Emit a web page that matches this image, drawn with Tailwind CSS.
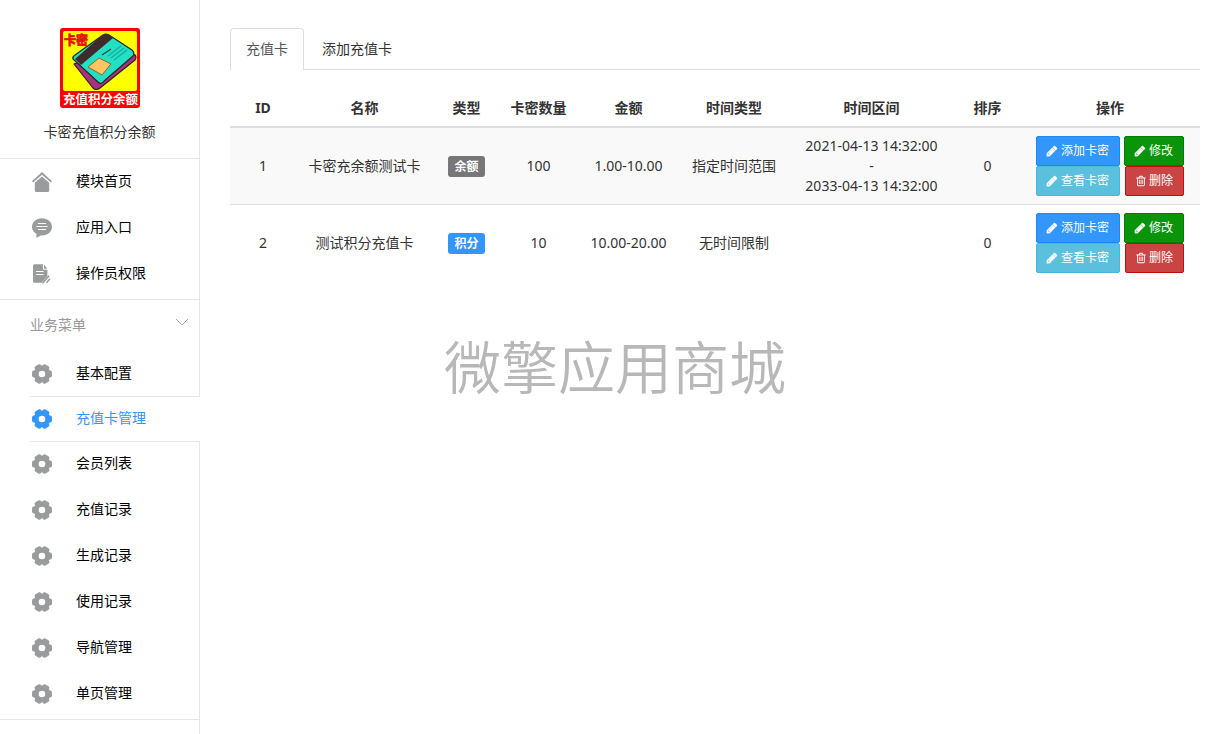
<!DOCTYPE html>
<html lang="zh-CN">
<head>
<meta charset="utf-8">
<title>充值卡管理</title>
<script src="https://cdn.jsdelivr.net/npm/@tailwindcss/browser@4"></script>
</head>
<body class="flex min-h-screen bg-white font-['Noto_Sans','Noto_Sans_CJK_SC',sans-serif] text-sm leading-5 text-[#333]">
<svg class="hidden" aria-hidden="true">
  <symbol id="gear" viewBox="0 0 20 20">
    <g fill="currentColor">
      <circle cx="10" cy="10" r="8.4"/>
      <rect x="0" y="6.4" width="20" height="7.2" rx="2"/>
      <rect x="0" y="6.4" width="20" height="7.2" rx="2" transform="rotate(60 10 10)"/>
      <rect x="0" y="6.4" width="20" height="7.2" rx="2" transform="rotate(120 10 10)"/>
    </g>
    <circle cx="10" cy="10" r="3.3" fill="#fff"/>
  </symbol>
  <symbol id="pencil" viewBox="0 0 1792 1792"><path fill="currentColor" d="M491 1536l91-91-235-235-91 91v107h128v128h107zm523-928q0-22-22-22-10 0-17 7l-542 542q-7 7-7 17 0 22 22 22 10 0 17-7l542-542q7-7 7-17zm-54-192l416 416-832 832h-416v-416zm683 96q0 53-37 90l-166 166-416-416 166-165q36-38 90-38 53 0 91 38l235 234q37 39 37 91z" stroke="currentColor" stroke-width="60"/></symbol>
  <symbol id="trash" viewBox="0 0 1792 1792"><path fill="currentColor" d="M704 736v576q0 14-9 23t-23 9h-64q-14 0-23-9t-9-23v-576q0-14 9-23t23-9h64q14 0 23 9t9 23zm256 0v576q0 14-9 23t-23 9h-64q-14 0-23-9t-9-23v-576q0-14 9-23t23-9h64q14 0 23 9t9 23zm256 0v576q0 14-9 23t-23 9h-64q-14 0-23-9t-9-23v-576q0-14 9-23t23-9h64q14 0 23 9t9 23zm128 724v-948h-896v948q0 22 7 40.5t14.5 27 10.5 8.5h832q3 0 10.5-8.5t14.5-27 7-40.5zm-672-1076h448l-48-117q-7-9-17-11h-317q-10 2-17 11zm928 32v64q0 14-9 23t-23 9h-96v948q0 83-47 143.5t-113 60.5h-832q-66 0-113-58.5t-47-141.5v-952h-96q-14 0-23-9t-9-23v-64q0-14 9-23t23-9h309l70-167q15-37 54-63t79-26h320q40 0 79 26t54 63l70 167h309q14 0 23 9t9 23z"/></symbol>
</svg>

<aside class="w-50 shrink-0 border-r border-[#e7e7eb]">
  <div class="flex flex-col items-center border-b border-[#e7e7eb] pt-7 pb-[15px]">
    <svg class="size-20" viewBox="0 0 80 80" role="img" aria-label="卡密充值积分余额">
      <rect width="80" height="80" rx="3" fill="#f00"/>
      <rect x="3" y="3" width="74" height="60" rx="2" fill="#ff0"/>
      <path d="M14 36 L62 20 L75 27 Q77 29 75 32 L40 60 Q36 63 33 60 Z" fill="#a8327c" stroke="#222" stroke-width="1.2" stroke-linejoin="round"/>
      <path d="M13 31 Q12 29 15 27 L43 7 Q46 5 49 7 L72 22 Q75 25 73 28 L44 53 Q41 57 38 54 Z" fill="#23e0c4" stroke="#1a2b2b" stroke-width="1.2" stroke-linejoin="round"/>
      <path d="M39 10 L44 6.5 Q46 5.500 49 7 L53 10 L21 37 L15 31 Z" fill="#402a2a"/>
      <path d="M28 39 L39 30 L51 36 L42 47 Z" fill="#ffc562" stroke="#8a6a2a"/>
      <path d="M42 27 L51 21" stroke="#134a44" stroke-width="1.4"/>
      <path d="M48 28 L61 18 M51 30 L64 20 M54 32 L67 22" stroke="#17b09b" stroke-width="1.4"/>
      <text x="4" y="17" font-size="12" font-weight="900" fill="#e81000" stroke="#e81000" stroke-width=".6">卡密</text>
      <text x="3" y="76" font-size="12.5" font-weight="700" fill="#fff">充值积分余额</text>
    </svg>
    <h1 class="mt-3.5 mb-px">卡密充值积分余额</h1>
  </div>

  <nav class="border-b border-[#e7e7eb] pb-0.5 pl-[30px] text-black" aria-label="模块">
    <a href="#" class="flex h-[46px] items-center pl-0.5">
      <svg class="mr-6 size-5 text-[#999b9d]" viewBox="0 0 20 20" fill="currentColor"><path d="M10 0 L20 9.3 L18.9 10.6 L10 2.7 L1.1 10.6 L0 9.3 Z"/><path d="M10 4.4 L17.2 10.8 V18.5 Q17.2 20 15.7 20 H4.3 Q2.8 20 2.8 18.5 V10.8 Z"/></svg>
      <span class="pb-0.5">模块首页</span></a>
    <a href="#" class="flex h-[46px] items-center pl-0.5">
      <svg class="mr-6 size-5 text-[#999b9d]" viewBox="0 0 20 20"><path fill="currentColor" d="M10 .3 C15.6 .3 20 4.2 20 9 C20 13.8 15.6 17.4 10 17.4 L9.2 17.3 L4.4 20 V15.8 Q0 13.2 0 9 C0 4.2 4.400 .3 10 .3Z"/><path d="M6 5.500h8M4.500 8.500h11M6 11.500h8" stroke="#fff" stroke-width="1.1"/></svg>
      <span class="pb-0.5">应用入口</span></a>
    <a href="#" class="flex h-[46px] items-center pl-0.5">
      <svg class="mr-6 size-5 text-[#999b9d]" viewBox="0 0 20 20"><path fill="currentColor" d="M2.500 .3H11V4.500Q11 5.800 12.300 5.800H15.400V12.600L9.600 18.800H2.500Q1 18.800 1 17.300V1.800Q1 .3 2.500 .3ZM12 .5L15.400 4.700H12Z"/><path d="M4 7.500h7.500M4 10.500h7.500" stroke="#fff" stroke-width="1.2"/><path d="M10.500 19.300L17.200 11.700M14.500 18.800L18 14.800" stroke="currentColor" stroke-width="1.5"/></svg>
      <span class="pb-0.5">操作员权限</span></a>
  </nav>

  <nav class="border-b border-[#e7e7eb] pb-0.5 pl-[30px] text-black" aria-label="业务菜单">
    <button type="button" class="flex h-[51px] w-full items-center justify-between pr-2.5 text-[#999]">
      <span class="pb-0.5">业务菜单</span>
      <svg class="mb-2 h-2 w-3.5" viewBox="0 0 14 8" fill="none" stroke="#9aa9bb"><path d="M1 1l6 6 6-6"/></svg>
    </button>
    <a href="#" class="flex h-[46px] items-center pl-0.5"><svg class="mr-6 size-5 text-[#999b9d]"><use href="#gear"/></svg><span class="pb-0.5">基本配置</span></a>
    <a href="#" aria-current="page" class="relative -my-px -mr-px flex h-[46px] items-center border-y border-[#e7e7eb] bg-white pl-0.5 text-[#3296fa]"><svg class="mr-6 size-5"><use href="#gear"/></svg><span class="pb-0.5">充值卡管理</span></a>
    <a href="#" class="flex h-[46px] items-center pl-0.5"><svg class="mr-6 size-5 text-[#999b9d]"><use href="#gear"/></svg><span class="pb-0.5">会员列表</span></a>
    <a href="#" class="flex h-[46px] items-center pl-0.5"><svg class="mr-6 size-5 text-[#999b9d]"><use href="#gear"/></svg><span class="pb-0.5">充值记录</span></a>
    <a href="#" class="flex h-[46px] items-center pl-0.5"><svg class="mr-6 size-5 text-[#999b9d]"><use href="#gear"/></svg><span class="pb-0.5">生成记录</span></a>
    <a href="#" class="flex h-[46px] items-center pl-0.5"><svg class="mr-6 size-5 text-[#999b9d]"><use href="#gear"/></svg><span class="pb-0.5">使用记录</span></a>
    <a href="#" class="flex h-[46px] items-center pl-0.5"><svg class="mr-6 size-5 text-[#999b9d]"><use href="#gear"/></svg><span class="pb-0.5">导航管理</span></a>
    <a href="#" class="flex h-[46px] items-center pl-0.5"><svg class="mr-6 size-5 text-[#999b9d]"><use href="#gear"/></svg><span class="pb-0.5">单页管理</span></a>
  </nav>
</aside>

<main class="min-w-0 flex-1 px-[30px] pt-7">
  <nav class="flex border-b border-[#ddd]" aria-label="充值卡">
    <a href="#" aria-current="page" class="-mb-px mr-0.5 rounded-t border border-b-0 border-[#ddd] bg-white px-[15px] pt-2.5 pb-[11px] text-[#555]">充值卡</a>
    <a href="#" class="px-4 pt-[11px] pb-2.5">添加充值卡</a>
  </nav>

  <table class="mt-5 w-full table-fixed border-collapse text-center">
    <colgroup>
      <col class="w-[66px]"><col class="w-[137px]"><col class="w-[67px]"><col class="w-[77px]"><col class="w-[103px]"><col class="w-[108px]"><col class="w-[167px]"><col class="w-[65px]"><col class="w-[180px]">
    </colgroup>
    <thead>
      <tr class="h-[37px] border-b-2 border-[#ddd]">
        <th scope="col">ID</th><th scope="col">名称</th><th scope="col">类型</th><th scope="col">卡密数量</th><th scope="col">金额</th><th scope="col">时间类型</th><th scope="col">时间区间</th><th scope="col">排序</th><th scope="col">操作</th>
      </tr>
    </thead>
    <tbody>
      <tr class="border-b border-[#ddd] bg-[#f9f9f9]">
        <td>1</td>
        <td>卡密充余额测试卡</td>
        <td><span class="inline-block rounded-[3px] bg-[#777] px-1.5 text-xs leading-[21px] font-bold text-white">余额</span></td>
        <td>100</td>
        <td>1.00-10.00</td>
        <td>指定时间范围</td>
        <td>2021-04-13 14:32:00<br>-<br>2033-04-13 14:32:00</td>
        <td>0</td>
        <td class="py-2">
          <div class="flex justify-center gap-1 text-xs leading-[18px] text-white">
            <div class="flex flex-col">
              <a href="#" class="flex items-center gap-[3px] rounded-xs border border-[#1989fa] bg-[#3296fa] py-[5px] pr-2.5 pl-[9px]"><svg class="size-3"><use href="#pencil"/></svg>添加卡密</a>
              <a href="#" class="flex items-center gap-[3px] rounded-xs border border-[#46b8da] bg-[#5bc0de] py-[5px] pr-2.5 pl-[9px]"><svg class="size-3"><use href="#pencil"/></svg>查看卡密</a>
            </div>
            <div class="flex flex-col items-end">
              <a href="#" class="flex items-center gap-[3px] rounded-xs border border-[#007d00] bg-[#099409] py-[5px] pr-2.5 pl-[9px]"><svg class="size-3"><use href="#pencil"/></svg>修改</a>
              <button type="button" class="flex items-center gap-0.5 rounded-xs border border-[#b91010] bg-[#c94442] py-[5px] pr-2.5 pl-[9px]"><svg class="size-3"><use href="#trash"/></svg>删除</button>
            </div>
          </div>
        </td>
      </tr>
      <tr>
        <td>2</td>
        <td>测试积分充值卡</td>
        <td><span class="inline-block rounded-[3px] bg-[#3296fa] px-1.5 text-xs leading-[21px] font-bold text-white">积分</span></td>
        <td>10</td>
        <td>10.00-20.00</td>
        <td>无时间限制</td>
        <td></td>
        <td>0</td>
        <td class="py-2">
          <div class="flex justify-center gap-1 text-xs leading-[18px] text-white">
            <div class="flex flex-col">
              <a href="#" class="flex items-center gap-[3px] rounded-xs border border-[#1989fa] bg-[#3296fa] py-[5px] pr-2.5 pl-[9px]"><svg class="size-3"><use href="#pencil"/></svg>添加卡密</a>
              <a href="#" class="flex items-center gap-[3px] rounded-xs border border-[#46b8da] bg-[#5bc0de] py-[5px] pr-2.5 pl-[9px]"><svg class="size-3"><use href="#pencil"/></svg>查看卡密</a>
            </div>
            <div class="flex flex-col items-end">
              <a href="#" class="flex items-center gap-[3px] rounded-xs border border-[#007d00] bg-[#099409] py-[5px] pr-2.5 pl-[9px]"><svg class="size-3"><use href="#pencil"/></svg>修改</a>
              <button type="button" class="flex items-center gap-0.5 rounded-xs border border-[#b91010] bg-[#c94442] py-[5px] pr-2.5 pl-[9px]"><svg class="size-3"><use href="#trash"/></svg>删除</button>
            </div>
          </div>
        </td>
      </tr>
    </tbody>
  </table>

</main>
<p class="pointer-events-none absolute inset-x-0 top-1/2 -translate-y-1/2 text-center text-[57px] leading-none font-[350] text-[#b8b8b8]">微擎应用商城</p>
</body>
</html>
